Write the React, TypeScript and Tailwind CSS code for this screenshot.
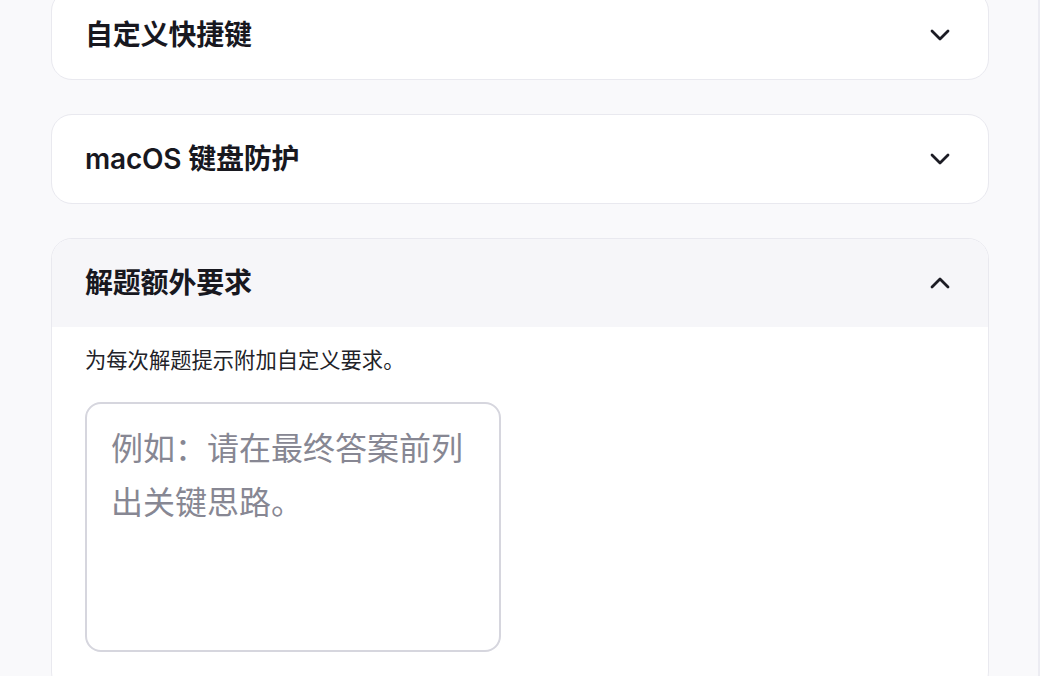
import React from 'react';

const font = { fontFamily: 'Inter, "Noto Sans CJK SC", sans-serif' };

const Chevron = ({ up = false }: { up?: boolean }) => (
  <svg
    width="32"
    height="32"
    viewBox="0 0 24 24"
    fill="none"
    stroke="#1c1c24"
    strokeWidth="2.1"
    strokeLinecap="round"
    strokeLinejoin="round"
    className="shrink-0"
  >
    <path d={up ? 'm6 15 6-6 6 6' : 'm6 9 6 6 6-6'} />
  </svg>
);

interface SectionProps {
  title: string;
  open?: boolean;
  children?: React.ReactNode;
}

const Section: React.FC<SectionProps> = ({ title, open = false, children }) => (
  <div className="rounded-[21px] border border-[#e9e9ef] bg-white overflow-hidden">
    <div
      className={
        open
          ? 'flex h-[88px] items-center justify-between bg-[#f6f6f9] pl-[33px] pr-[32px]'
          : 'flex h-[88px] items-center justify-between pl-[33px] pr-[32px]'
      }
    >
      <span className="text-[28px] font-semibold text-[#18181f] tracking-[-0.2px]">{title}</span>
      <Chevron up={open} />
    </div>
    {open && children}
  </div>
);

export default function App() {
  return (
    <div style={font} className="flex h-[676px] w-[1040px] overflow-hidden bg-[#f9f9fb]">
      <div className="flex-1 pl-[51px] pr-[49px]">
        <div className="-mt-[10px] flex flex-col gap-[34px]">
          <Section title="自定义快捷键" />
          <Section title="macOS 键盘防护" />
          <Section title="解题额外要求" open>
            <div className="px-[33px] pt-[17px] pb-10">
              <p className="text-[21.3px] leading-[32px] text-[#222228]">为每次解题提示附加自定义要求。</p>
              <textarea
                placeholder="例如：请在最终答案前列出关键思路。"
                className="mt-[26px] block h-[250px] w-[416px] resize-none rounded-[16px] border-2 border-[#d6d6de] bg-white px-[24px] pt-[18px] text-[32px] leading-[54px] text-[#222228] outline-none placeholder:text-[#878793]"
                style={font}
              />
            </div>
          </Section>
        </div>
      </div>
      <div className="w-[2px] bg-[#ececf2]" />
    </div>
  );
}
